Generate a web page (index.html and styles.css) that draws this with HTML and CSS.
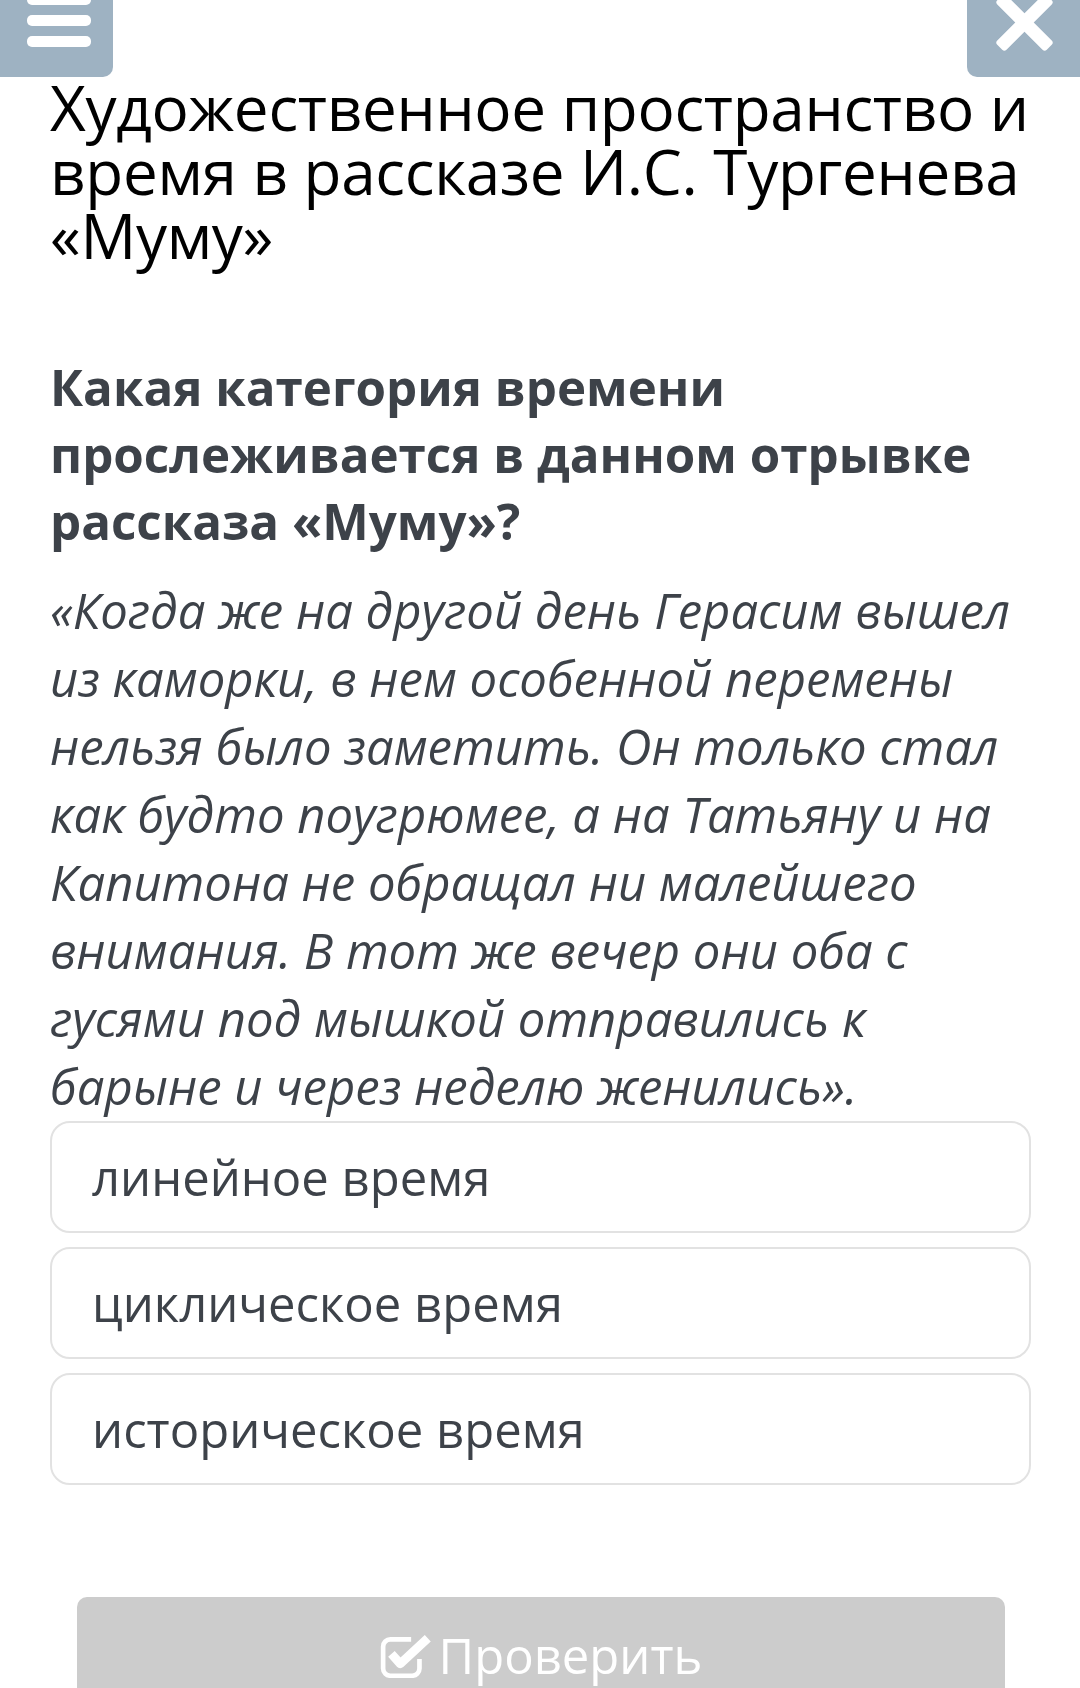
FILE: index.html
```html
<!DOCTYPE html>
<html lang="ru">
<head>
	<meta charset="UTF-8">
	<title>Муму — тест</title>
	<link rel="stylesheet" href="styles.css">
</head>
<body>
	<div class="topbar">
		<button class="topbar-btn menu-btn" type="button">
			<svg width="113" height="77" viewBox="0 0 113 77">
				<rect x="27" y="-6" width="64" height="11" rx="5" fill="#fff"/>
				<rect x="27" y="15" width="64" height="11" rx="5" fill="#fff"/>
				<rect x="27" y="36" width="64" height="11" rx="5" fill="#fff"/>
			</svg>
		</button>
		<button class="topbar-btn close-btn" type="button">
			<svg width="113" height="77" viewBox="0 0 113 77">
				<g transform="translate(57.5 22.5) rotate(45)">
					<rect x="-35" y="-6.5" width="70" height="13" rx="3" fill="#fff"/>
					<rect x="-6.5" y="-35" width="13" height="70" rx="3" fill="#fff"/>
				</g>
			</svg>
		</button>
	</div>
	<div class="quiz">
		<h1 class="quiz-title">Художественное пространство и время в рассказе И.С. Тургенева «Муму»</h1>
		<h2 class="question">Какая категория времени прослеживается в данном отрывке рассказа «Муму»?</h2>
		<p class="excerpt">«Когда же на другой день Герасим вышел из каморки, в нем особенной перемены нельзя было заметить. Он только стал как будто поугрюмее, а на Татьяну и на Капитона не обращал ни малейшего внимания. В тот же вечер они оба с гусями под мышкой отправились к барыне и через неделю женились».</p>
		<ul class="answers">
			<li class="answer">линейное время</li>
			<li class="answer">циклическое время</li>
			<li class="answer">историческое время</li>
		</ul>
		<button class="check-btn" type="button">
			<svg width="54" height="44" viewBox="0 0 52 42">
				<path d="M30 5 H10 a7 7 0 0 0 -7 7 V33 a7 7 0 0 0 7 7 H31 a7 7 0 0 0 7 -7 V24" fill="none" stroke="#fff" stroke-width="4.5"/>
				<path d="M11 19 L19.5 28.5 L46 4" fill="none" stroke="#fff" stroke-width="8.5" stroke-linejoin="round"/>
			</svg>
			<span>Проверить</span>
		</button>
	</div>
</body>
</html>
```

FILE: styles.css
```css
*{
	margin: 0px;
	padding: 0px;
	box-sizing: border-box;
}
html, body{
	height: 1688px;
	overflow: hidden;
	background-color: #fff;
}
body{
	font-family: "Open Sans", "Noto Sans", sans-serif;
	color: #3d4249;
}
ul{
	list-style: none;
}
button{
	border: none;
	font-family: inherit;
	cursor: pointer;
}
.topbar{
	display: flex;
	justify-content: space-between;
	height: 77px;
}
.topbar-btn{
	width: 113px;
	height: 77px;
	background-color: #9eb2c2;
	display: block;
	overflow: hidden;
}
.topbar-btn svg{
	display: block;
}
.menu-btn{
	border-bottom-right-radius: 10px;
}
.close-btn{
	border-bottom-left-radius: 10px;
}
.quiz{
	padding: 0 49px 0 50px;
}
.quiz-title{
	font-size: 62px;
	font-weight: 400;
	letter-spacing: -0.3px;
	line-height: 64px;
	color: #000;
	margin-top: -2px;
}
.question{
	font-size: 49.3px;
	font-weight: 700;
	line-height: 67px;
	margin-top: 86px;
}
.excerpt{
	font-size: 49px;
	font-style: italic;
	line-height: 68px;
	margin-top: 22px;
}
.answers{
	display: flex;
	flex-direction: column;
	gap: 14px;
	margin-top: 1px;
}
.answer{
	height: 112px;
	border: 2px solid #e2e2e2;
	border-radius: 20px;
	display: flex;
	align-items: center;
	padding-left: 40px;
	font-size: 49px;
}
.check-btn{
	display: flex;
	justify-content: center;
	align-items: flex-start;
	gap: 5px;
	width: 928px;
	height: 140px;
	margin: 112px 0 0 27px;
	padding-top: 34px;
	background-color: #ccc;
	border-radius: 10px;
	color: #fff;
	font-size: 49px;
	line-height: 1;
}
.check-btn svg{
	margin-top: 3px;
}
```
